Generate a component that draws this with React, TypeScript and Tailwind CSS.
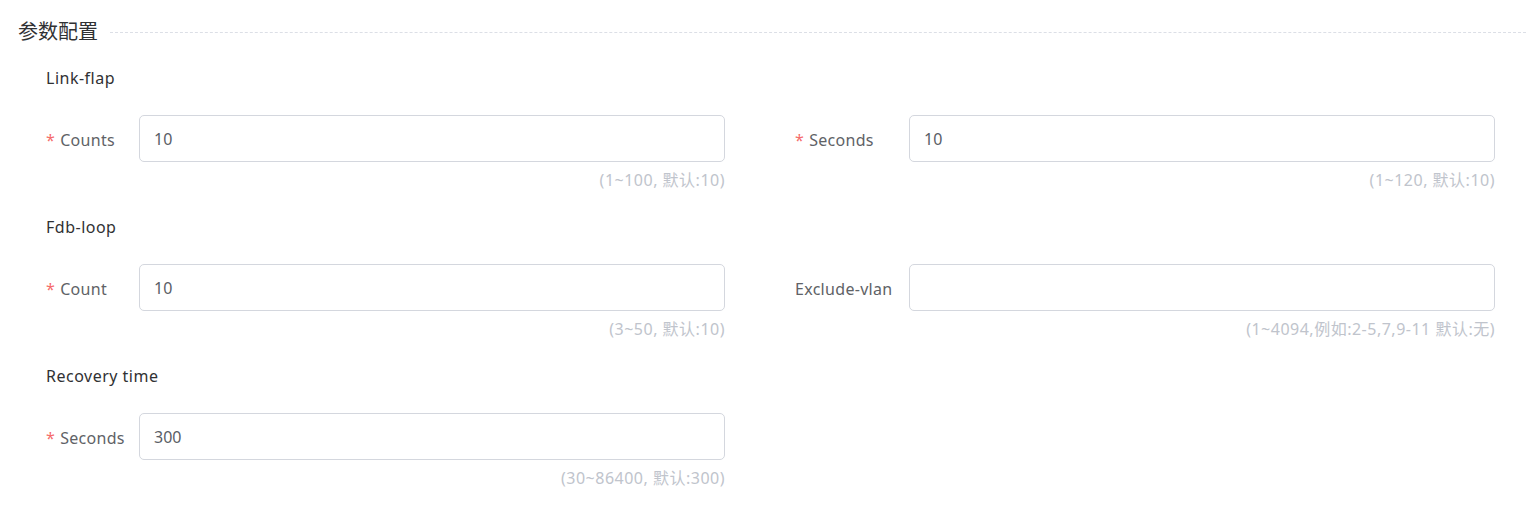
const Field = ({
  label,
  required,
  value,
  hint,
  labelWidth,
}: {
  label: string
  required?: boolean
  value: string
  hint: string
  labelWidth: string
}) => {
  return (
    <div className="flex flex-col">
      <div className="flex items-center">
        <label className={`${labelWidth} shrink-0 pt-[3px] text-[16px] tracking-[0.3px] text-[#606266]`}>
          {required && <span className="text-[#f56c6c] mr-[5px]">*</span>}
          {label}
        </label>
        <input
          type="text"
          defaultValue={value}
          className="w-[586px] h-[47px] px-[14px] rounded-[5px] border border-[#d4d7de] text-[16px] text-[#5a5e66] outline-none bg-white"
        />
      </div>
      <div className="h-[38px] pb-[3px] flex items-center justify-end text-[16px] tracking-[0.5px] text-[#c0c4cc]">{hint}</div>
    </div>
  )
}

const Heading = ({ children }: { children: string }) => (
  <div className="h-[24px] leading-[24px] text-[16px] tracking-[0.5px] text-[#303133] mb-[25px]">{children}</div>
)

export default function App() {
  return (
    <div
      className="w-[1526px] h-[520px] bg-white overflow-hidden"
      style={{ fontFamily: '"Noto Sans", "Noto Sans CJK SC", sans-serif' }}
    >
      <div className="flex items-center h-[24px] mt-[20px]">
        <span className="pl-[18px] pr-[12px] text-[20px] text-[#303133] leading-[24px]">参数配置</span>
        <div className="flex-1 border-t border-dashed border-[#dcdfe6]" />
      </div>

      <div className="pl-[46px] mt-[22px]">
        <Heading>Link-flap</Heading>
        <div className="flex gap-[70px]">
          <Field label="Counts" required value="10" hint="(1~100, 默认:10)" labelWidth="w-[93px]" />
          <Field label="Seconds" required value="10" hint="(1~120, 默认:10)" labelWidth="w-[114px]" />
        </div>

        <div className="mt-[15px]">
          <Heading>Fdb-loop</Heading>
        </div>
        <div className="flex gap-[70px]">
          <Field label="Count" required value="10" hint="(3~50, 默认:10)" labelWidth="w-[93px]" />
          <Field label="Exclude-vlan" value="" hint="(1~4094,例如:2-5,7,9-11 默认:无)" labelWidth="w-[114px]" />
        </div>

        <div className="mt-[15px]">
          <Heading>Recovery time</Heading>
        </div>
        <div className="flex gap-[70px]">
          <Field label="Seconds" required value="300" hint="(30~86400, 默认:300)" labelWidth="w-[93px]" />
        </div>
      </div>
    </div>
  )
}
